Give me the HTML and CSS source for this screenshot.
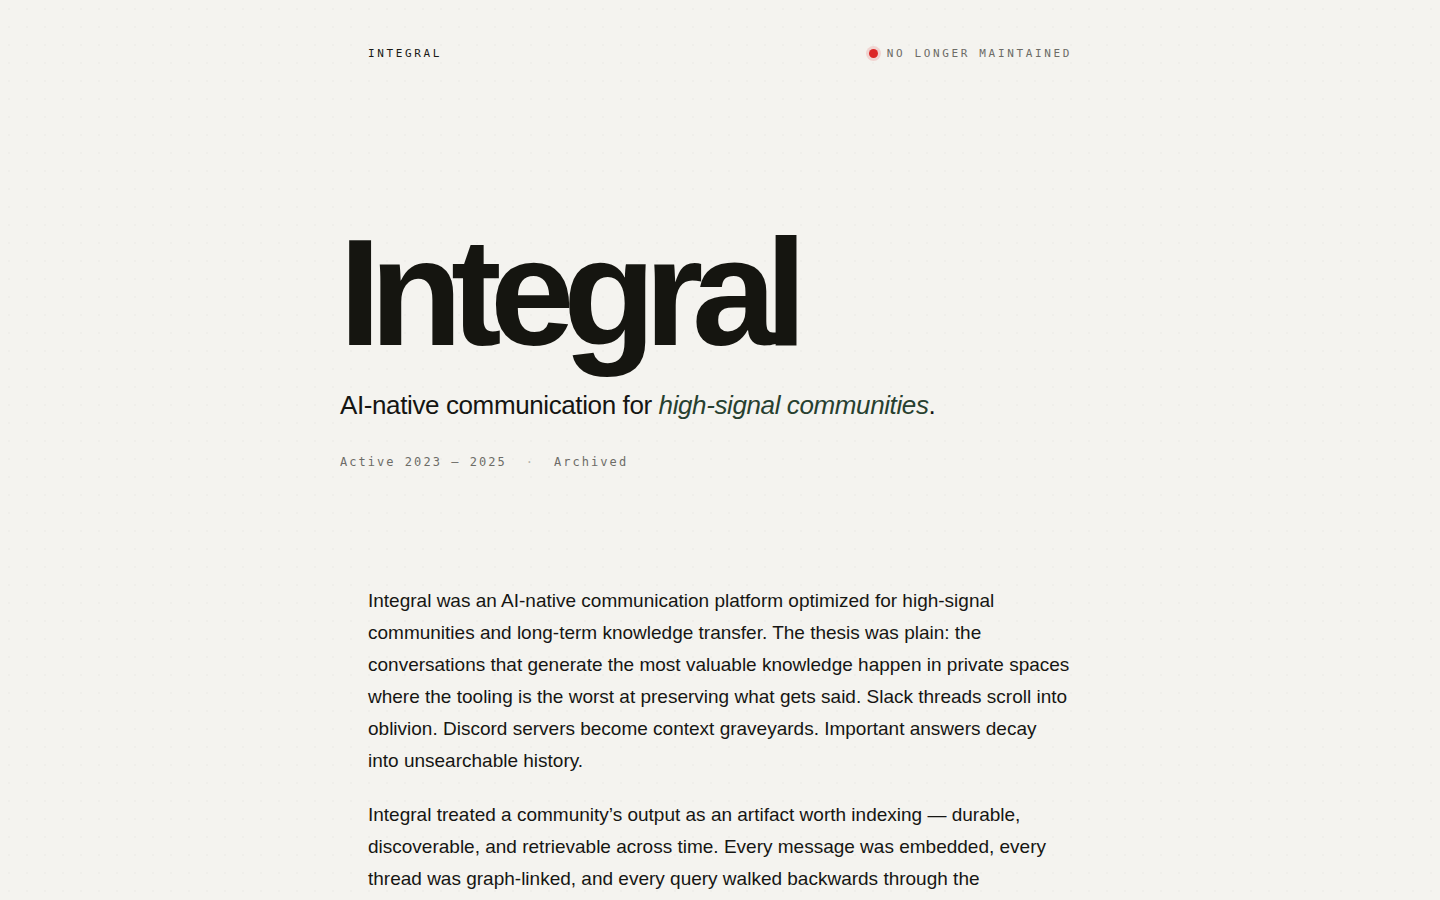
FILE: index.html
```html
<!DOCTYPE html>
<html lang="en">
<head>
<meta charset="utf-8">
<title>Integral</title>
<link rel="stylesheet" href="styles.css">
</head>
<body>
<div class="page">
  <header class="topbar">
    <div class="brand">INTEGRAL</div>
    <div class="status"><span class="dot"></span><span>NO LONGER MAINTAINED</span></div>
  </header>
  <section class="hero">
    <h1 class="title">Integral</h1>
    <p class="tagline">AI-native communication for <em>high-signal communities</em>.</p>
    <div class="meta"><span>Active 2023 — 2025</span><span class="sep">·</span><span>Archived</span></div>
  </section>
  <main class="body">
    <p>Integral was an AI-native communication platform optimized for high-signal communities and long-term knowledge transfer. The thesis was plain: the conversations that generate the most valuable knowledge happen in private spaces where the tooling is the worst at preserving what gets said. Slack threads scroll into oblivion. Discord servers become context graveyards. Important answers decay into unsearchable history.</p>
    <p>Integral treated a community’s output as an artifact worth indexing — durable, discoverable, and retrievable across time. Every message was embedded, every thread was graph-linked, and every query walked backwards through the community’s history to find the answer that had already been given.</p>
  </main>
</div>
</body>
</html>
```
FILE: styles.css
```css
* { box-sizing: border-box; }
html, body { margin: 0; padding: 0; }
body {
  background-color: #f4f3ef;
  background-image: radial-gradient(circle, rgba(0,0,0,0.018) 1px, transparent 1.2px);
  background-size: 18px 18px;
  color: #151512;
  font-family: "Liberation Sans", Arial, sans-serif;
}
.page {
  width: 704px;
  margin: 0 auto;
}
.topbar {
  height: 106px;
  display: flex;
  justify-content: space-between;
  align-items: center;
  font-family: "DejaVu Sans Mono", monospace;
  font-size: 11px;
  letter-spacing: 0.24em;
}
.brand { color: #1a1a17; }
.status {
  display: flex;
  align-items: center;
  gap: 9px;
  color: #6d6c67;
}
.dot {
  width: 9px;
  height: 9px;
  border-radius: 50%;
  background: #dc2626;
  box-shadow: 0 0 0 3px rgba(220, 38, 38, 0.15);
}
.hero {
  margin-left: -28px;
  padding-top: 110px;
}
.title {
  margin: 0 0 0 -1px;
  font-size: 152px;
  font-weight: 700;
  letter-spacing: -0.076em;
  line-height: 1;
  color: #151510;
}
.tagline {
  margin: 22px 0 0;
  font-size: 26px;
  letter-spacing: -0.015em;
  line-height: 1.2;
  color: #151512;
}
.tagline em {
  color: #27402f;
  font-style: italic;
}
.meta {
  margin-top: 34px;
  display: flex;
  gap: 19px;
  font-family: "DejaVu Sans Mono", monospace;
  font-size: 12px;
  letter-spacing: 0.17em;
  color: #6d6c67;
}
.meta .sep { color: #b5b3ad; }
.body {
  padding-top: 116px;
}
.body p {
  margin: 0 0 22px;
  font-size: 19px;
  line-height: 32px;
  color: #161613;
}
```
